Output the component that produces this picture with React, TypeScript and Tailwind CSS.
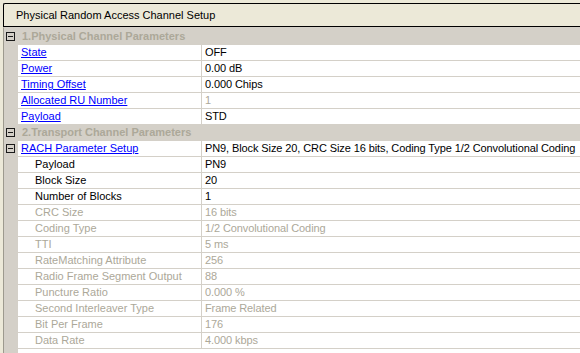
import React from 'react'

type Row = {
  name: string
  value: string
  link?: boolean
  sub?: boolean
  disabled?: boolean
  disabledValue?: boolean
  expander?: boolean
}

type Section = {
  title: string
  rows: Row[]
}

const sections: Section[] = [
  {
    title: '1.Physical Channel Parameters',
    rows: [
      { name: 'State', value: 'OFF', link: true },
      { name: 'Power', value: '0.00 dB', link: true },
      { name: 'Timing Offset', value: '0.000 Chips', link: true },
      { name: 'Allocated RU Number', value: '1', link: true, disabledValue: true },
      { name: 'Payload', value: 'STD', link: true },
    ],
  },
  {
    title: '2.Transport Channel Parameters',
    rows: [
      {
        name: 'RACH Parameter Setup',
        value: 'PN9, Block Size 20, CRC Size 16 bits, Coding Type 1/2 Convolutional Coding',
        link: true,
        expander: true,
      },
      { name: 'Payload', value: 'PN9', sub: true },
      { name: 'Block Size', value: '20', sub: true },
      { name: 'Number of Blocks', value: '1', sub: true },
      { name: 'CRC Size', value: '16 bits', sub: true, disabled: true },
      { name: 'Coding Type', value: '1/2 Convolutional Coding', sub: true, disabled: true },
      { name: 'TTI', value: '5 ms', sub: true, disabled: true },
      { name: 'RateMatching Attribute', value: '256', sub: true, disabled: true },
      { name: 'Radio Frame Segment Output', value: '88', sub: true, disabled: true },
      { name: 'Puncture Ratio', value: '0.000 %', sub: true, disabled: true },
      { name: 'Second Interleaver Type', value: 'Frame Related', sub: true, disabled: true },
      { name: 'Bit Per Frame', value: '176', sub: true, disabled: true },
      { name: 'Data Rate', value: '4.000 kbps', sub: true, disabled: true },
    ],
  },
]

function MinusBox() {
  return (
    <div className="w-[9px] h-[9px] border border-[#1a1a1a] flex items-center justify-center">
      <div className="w-[5px] h-px bg-[#1a1a1a]" />
    </div>
  )
}

function SectionRow({ title }: { title: string }) {
  return (
    <div className="flex h-[16px] border-t border-[#D4D0C8] bg-[#D4D0C8]">
      <div className="w-[14px] flex items-center pl-[2px]">
        <MinusBox />
      </div>
      <div className="pl-[4px] leading-[15px] font-bold text-[#ACA899]">{title}</div>
    </div>
  )
}

function PropRow({ row }: { row: Row }) {
  const nameColor = row.disabled ? 'text-[#ACA899]' : 'text-black'
  const valueColor = row.disabled || row.disabledValue ? 'text-[#ACA899]' : 'text-black'
  return (
    <div className="flex h-[16px]">
      <div className="w-[14px] bg-[#D4D0C8] flex items-center pl-[2px]">
        {row.expander && <MinusBox />}
      </div>
      <div className="flex flex-1 border-t border-[#D4D0C8] bg-white">
        <div
          className={`w-[183px] shrink-0 leading-[15px] whitespace-nowrap ${
            row.sub ? 'pl-[17px]' : 'pl-[3px]'
          }`}
        >
          {row.link ? (
            <span className="text-[#0000FF] underline underline-offset-[1px]">{row.name}</span>
          ) : (
            <span className={nameColor}>{row.name}</span>
          )}
        </div>
        <div
          className={`flex-1 border-l border-[#D4D0C8] pl-[3px] leading-[15px] whitespace-nowrap tracking-[-0.1px] ${valueColor}`}
        >
          {row.value}
        </div>
      </div>
    </div>
  )
}

export default function App() {
  return (
    <div
      className="w-[580px] h-[353px] overflow-hidden bg-[#ECE9D8] pl-[3px] pt-[3px] flex flex-col text-[11px]"
      style={{ fontFamily: '"Liberation Sans", Arial, sans-serif' }}
    >
      {/* Header */}
      <div className="h-[24px] shrink-0 border-l border-t border-b border-black rounded-tl-[2px] bg-[#ECE9D8] flex items-center pl-[12px] text-[11px] text-black">
        Physical Random Access Channel Setup
      </div>

      {/* Property grid */}
      <div className="flex-1 flex flex-col border-l border-[#9D9A8E] border-t border-t-[#D4D0C8] overflow-hidden">
        {sections.map((s) => (
          <div key={s.title}>
            <SectionRow title={s.title} />
            {s.rows.map((r) => (
              <PropRow key={s.title + r.name} row={r} />
            ))}
          </div>
        ))}
        <div className="flex flex-1">
          <div className="w-[14px] bg-[#D4D0C8]" />
          <div className="flex-1 border-t border-[#D4D0C8] bg-white" />
        </div>
      </div>
    </div>
  )
}
